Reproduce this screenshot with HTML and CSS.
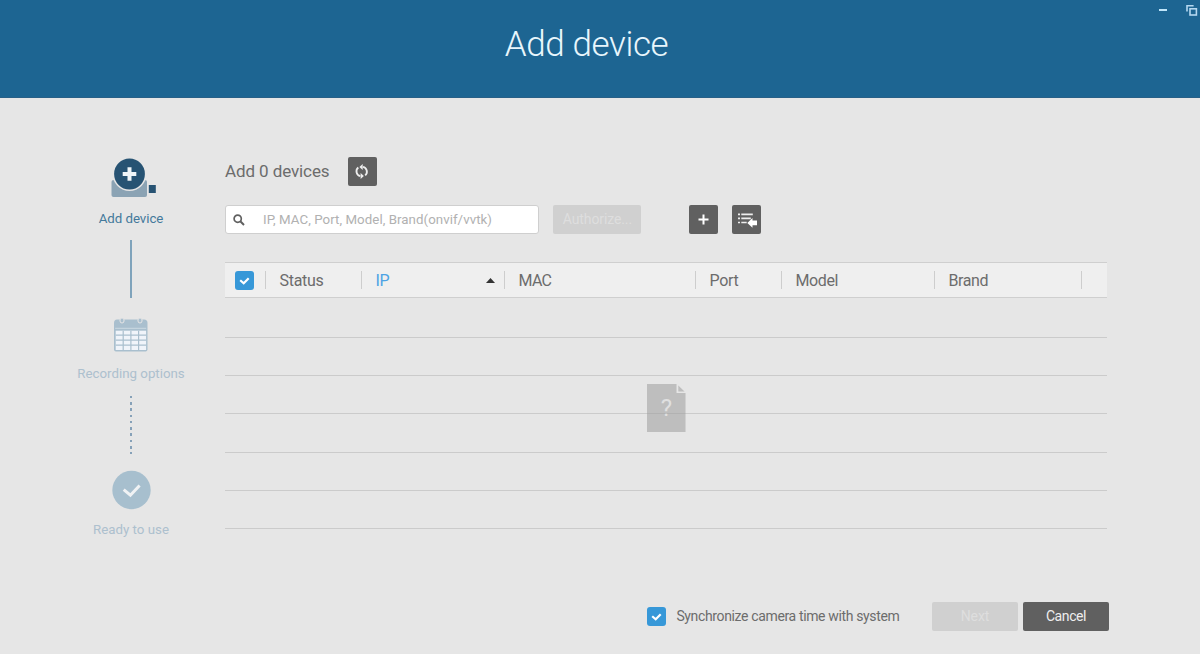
FILE: index.html
```html
<!DOCTYPE html>
<html lang="en">
<head>
<meta charset="utf-8">
<title>Add device</title>
<link rel="stylesheet" href="styles.css">
</head>
<body>
<header class="titlebar">
  <h1 class="title">Add device</h1>
  <div class="window-controls">
    <svg width="8" height="14" viewBox="0 0 8 14"><path d="M0 7h8" stroke="#c0e6fa" stroke-width="2"/></svg>
    <svg width="14" height="14" viewBox="0 0 14 14" fill="none" stroke="#b5d8f0" stroke-width="1.6"><path d="M1 8.6V2.8H7.6"/><rect x="4" y="5.8" width="6.4" height="6.2"/></svg>
  </div>
</header>
<div class="content">
  <nav class="steps">
    <div class="step active">
      <svg class="step-icon" width="46" height="42" viewBox="0 0 46 42">
        <path d="M1.500 25q0-2 2-2h31.500q2 0 2 2v13q0 2-2 2H3.500q-2 0-2-2z" fill="#8ba3b4"/>
        <circle cx="19.500" cy="17" r="17" fill="#e6e6e6"/>
        <circle cx="19.500" cy="17" r="15.400" fill="#275373"/>
        <path d="M19.500 10.200v13.600M12.700 17h13.600" stroke="#f0f5f8" stroke-width="4"/>
        <rect x="38.800" y="28" width="7" height="8" fill="#275373"/>
      </svg>
      <span class="step-label">Add device</span>
    </div>
    <div class="link solid"></div>
    <div class="step">
      <svg class="step-icon" width="46" height="42" viewBox="0 0 46 42">
        <path d="M6 11q0-3.500 3-3.500h27q3.500 0 3.500 3.500v26.500q0 2-2 2H8q-2 0-2-2z" fill="#a9bfce"/>
        <path d="M7.200 16.300h31" stroke="#cbdae3"/>
        <path d="M7.700 18.700h30.400v19.300H7.700z" fill="#f0f4fa"/>
        <path d="M15.200 18.700v19.300M22.900 18.700v19.300M30.600 18.700v19.300M7.700 23.200h30.400M7.700 28.200h30.400M7.700 33.200h30.400" stroke="#a9bfce" stroke-width="1.200"/>
        <g fill="#a9bfce" stroke="#e6e6e6"><rect x="12" y="6" width="4" height="5" rx="2"/><rect x="30" y="6" width="4" height="5" rx="2"/></g>
      </svg>
      <span class="step-label">Recording options</span>
    </div>
    <div class="link dotted"></div>
    <div class="step">
      <svg class="step-icon" width="46" height="42" viewBox="0 0 46 42">
        <circle cx="23.500" cy="22" r="19.200" fill="#a7bfce"/>
        <path d="M15.700 21.600l6.700 5.600 9.200-9.700" fill="none" stroke="#f0f2f4" stroke-width="3"/>
      </svg>
      <span class="step-label">Ready to use</span>
    </div>
  </nav>
  <main class="main">
    <div class="heading-row">
      <span class="heading">Add 0 devices</span>
      <button class="icon-button">
        <svg width="29" height="29" viewBox="0 0 29 29"><g fill="none" stroke="#eee" stroke-width="1.8"><path d="M15 9.900a4.900 4.900 0 0 1 2.200 8.500M12.300 19.100a4.900 4.900 0 0 1-2-8.600"/></g><path d="M14.700 6.900v6l-3.300-3zM12.600 16.100v6l3.300-3z" fill="#eee"/></svg>
      </button>
    </div>
    <div class="toolbar">
      <div class="search">
        <svg width="12" height="12" viewBox="0 0 12 12" fill="none" stroke="#606060"><circle cx="4.700" cy="4.700" r="3.600" stroke-width="1.700"/><path d="M7.300 7.300l3.700 3.700" stroke-width="2"/></svg>
        <span class="placeholder">IP, MAC, Port, Model, Brand(onvif/vvtk)</span>
      </div>
      <button class="button disabled authorize">Authorize...</button>
      <button class="icon-button add">
        <svg width="29" height="29" viewBox="0 0 29 29"><path d="M14.500 9.500v10M9.500 14.500h10" stroke="#fff" stroke-width="2"/></svg>
      </button>
      <button class="icon-button">
        <svg width="29" height="29" viewBox="0 0 29 29"><path d="M6 9.300h2M6 13.400h2M6 17.500h2M9.300 9.300h11.500M9.300 13.400h9.500M9.300 17.500h5.400" stroke="#eee" stroke-width="1.700"/><path d="M15.300 17.900l5.200-4.900v2.600H25v4.600h-4.500v2.600z" fill="#fff"/></svg>
      </button>
    </div>
    <div class="table">
      <div class="table-head">
        <div class="cell check"><span class="checkbox"><svg width="19" height="19" viewBox="0 0 19 19"><path d="M5.200 9.200l3.500 3.100 5-5" fill="none" stroke="#fff" stroke-width="2.200"/></svg></span></div>
        <div class="cell status">Status</div>
        <div class="cell ip">IP<svg width="9" height="5" viewBox="0 0 9 5"><path d="M0 5L4.500 0 9 5z" fill="#333"/></svg></div>
        <div class="cell mac">MAC</div>
        <div class="cell port">Port</div>
        <div class="cell model">Model</div>
        <div class="cell brand">Brand</div>
      </div>
      <div class="row first"></div>
      <div class="row"></div>
      <div class="row"></div>
      <div class="row"></div>
      <div class="row"></div>
      <div class="row"></div>
      <div class="empty">
        <svg width="39" height="48" viewBox="0 0 39 48"><path d="M0 0h29.500v9H38.500V48H0z" fill="#a0a0a0" fill-opacity=".58"/><path d="M31.300 1.500v5.900h6.200z" fill="#a0a0a0" fill-opacity=".58"/></svg>
        <span class="question">?</span>
      </div>
    </div>
    <footer class="footer">
      <span class="checkbox"><svg width="19" height="19" viewBox="0 0 19 19"><path d="M5.200 9.200l3.500 3.100 5-5" fill="none" stroke="#fff" stroke-width="2.200"/></svg></span>
      <span class="sync">Synchronize camera time with system</span>
      <button class="button disabled next">Next</button>
      <button class="button cancel">Cancel</button>
    </footer>
  </main>
</div>
</body>
</html>
```
FILE: styles.css
```css
* { box-sizing: border-box; }
body {
  margin: 0;
  height: 654px;
  overflow: hidden;
  background: #e6e6e6;
  color: #6c6c6c;
  font-family: Roboto, "Liberation Sans", sans-serif;
  font-size: 16px;
}
svg { display: block; flex: none; }
button { border: 0; padding: 0; font: inherit; }

.titlebar {
  position: relative;
  height: 98px;
  padding-right: 27px;
  background: #1d6592;
  border-bottom: 1px solid #286087;
}
.title {
  margin: 0;
  text-align: center;
  color: #e8f6fc;
  font-size: 35px;
  font-weight: 300;
  letter-spacing: -0.4px;
  line-height: 90px;
}
.window-controls {
  position: absolute;
  top: 3px;
  right: 0;
  display: flex;
  gap: 19px;
}

.content { display: flex; }
.steps {
  width: 225px;
  padding: 59px 0 0 37px;
  display: flex;
  flex-direction: column;
  align-items: center;
}
.step {
  display: flex;
  flex-direction: column;
  align-items: center;
  color: #adc0ce;
}
.step.active { color: #43799b; }
.step-label { margin-top: 12px; font-size: 13.3px; line-height: 16px; white-space: nowrap; }
.active .step-label { letter-spacing: -0.05px; }
.step.active .step-icon { margin-left: 3px; }
.link { width: 2px; height: 58px; margin: 14px 0; }
.solid { margin-top: 13px; background: #7fa3bb; }
.dotted { background: repeating-linear-gradient(#86a1b8 0 2.5px, transparent 2.5px 6.25px); }

.main { width: 882px; }
.heading-row {
  display: flex;
  align-items: center;
  height: 29px;
  margin-top: 58.5px;
}
.heading { width: 123.4px; font-size: 17px; letter-spacing: -0.1px; line-height: 20px; padding-bottom: 1px; }
.icon-button {
  width: 29px;
  height: 29px;
  border-radius: 2px;
  background: #606060;
}
.toolbar { display: flex; margin-top: 19.5px; height: 29px; }
.search {
  width: 314.4px;
  display: flex;
  align-items: center;
  padding-left: 7px;
  gap: 18px;
  background: #fff;
  border: 1px solid #cfcfcf;
  border-radius: 3px;
}
.placeholder { color: #b1b1b1; font-size: 13.3px; letter-spacing: 0.05px; }
.button { height: 29px; border-radius: 2px; font-size: 14px; letter-spacing: -0.1px; }
.disabled { background: #d0d0d0; color: #dedede; }
.authorize { width: 88px; margin-left: 14px; padding-bottom: 2px; }
.add { margin: 0 14px 0 47.6px; }

.table { position: relative; margin-top: 28px; }
.table-head {
  display: flex;
  align-items: center;
  height: 36px;
  background: #efefef;
  border-top: 1px solid #cfcfcf;
  border-bottom: 1px solid #cfcfcf;
  letter-spacing: -0.3px;
}
.cell {
  display: flex;
  align-items: center;
  height: 18px;
  padding-left: 13.5px;
  border-right: 1px solid #cdcdcd;
}
.check { width: 41px; padding-left: 10px; }
.status { width: 96px; }
.ip { width: 143px; justify-content: space-between; padding-right: 9px; color: #4da3e4; }
.mac { width: 191px; letter-spacing: -0.7px; }
.port { width: 86px; }
.model { width: 153px; letter-spacing: -0.4px; }
.brand { width: 147px; letter-spacing: -0.4px; }
.row { height: 38.2px; border-bottom: 1px solid #cbcbcb; }
.row.first { height: 40px; }
.checkbox {
  width: 19px;
  height: 19px;
  flex: none;
  border-radius: 3px;
  background: #3798d8;
}
.empty { position: absolute; left: 422px; top: 122px; width: 39px; height: 48px; }
.question {
  position: absolute;
  inset: 0;
  text-align: center;
  font-size: 24px;
  line-height: 48px;
  color: #e0e0e0;
}

.footer {
  display: flex;
  align-items: center;
  height: 29px;
  margin: 73px -2px 0 422.4px;
}
.sync {
  width: 256px;
  padding-left: 10px;
  margin-right: 10px;
  font-size: 14px;
  letter-spacing: -0.36px;
  white-space: nowrap;
}
.next { width: 86px; margin-right: 5px; flex: none; }
.cancel { width: 86px; flex: none; background: #606060; color: #eee; letter-spacing: -0.4px; }
```
